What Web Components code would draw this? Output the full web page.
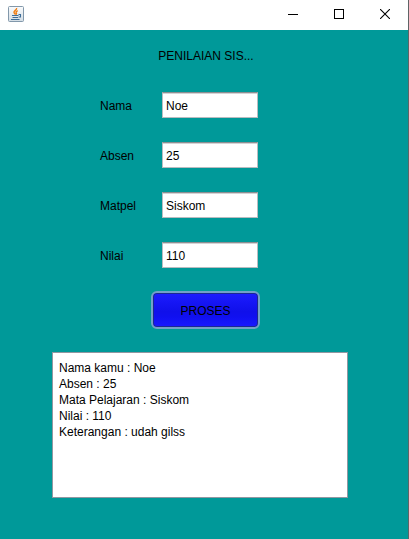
<!DOCTYPE html>
<html lang="id">
<head>
<meta charset="utf-8">
<title>Penilaian</title>
<style>
html, body { height: 100%; margin: 0; }
body { font: 12px/16px "Liberation Sans", Arial, sans-serif; color: #000; background: #fff; }
</style>
</head>
<body>
<app-window>
  <title-bar slot="bar"></title-bar>
  <grade-form>
    <span slot="heading">PENILAIAN SIS...</span>
    <text-field label="Nama" value="Noe"></text-field>
    <text-field label="Absen" value="25"></text-field>
    <text-field label="Matpel" value="Siskom"></text-field>
    <text-field label="Nilai" value="110"></text-field>
    <push-button slot="action">PROSES</push-button>
    <result-area slot="result">Nama kamu : Noe
Absen : 25
Mata Pelajaran : Siskom
Nilai : 110
Keterangan : udah gilss</result-area>
  </grade-form>
</app-window>
<script>
class Base extends HTMLElement {
  constructor() {
    super();
    this.attachShadow({ mode: "open" }).innerHTML = this.constructor.markup;
  }
}

customElements.define("app-window", class extends Base {
  static markup = `
    <style>
      :host { display: flex; flex-direction: column; min-height: 100vh; box-sizing: border-box;
              border-right: 1px solid #5f6466; background: #009999; }
      ::slotted(grade-form) { flex: 1; }
    </style>
    <slot name="bar"></slot><slot></slot>`;
});

customElements.define("title-bar", class extends Base {
  static markup = `
    <style>
      :host { display: flex; justify-content: space-between; align-items: center; height: 30px; background: #fff; }
      .app { display: block; margin-left: 8px; margin-bottom: 2px; }
      .controls { display: flex; }
      button { display: grid; place-items: center; width: 46px; height: 30px; padding: 0 0 2px; border: 0; background: none; }
      svg { display: block; }
    </style>
    <svg class="app" width="16" height="16" viewBox="0 0 16 16" aria-label="Java" role="img">
      <defs><linearGradient id="g" x2="0" y2="1"><stop stop-color="#fafbfc"/><stop offset="1" stop-color="#d3dde5"/></linearGradient></defs>
      <rect x=".5" y=".5" width="15" height="15" rx="1" fill="url(#g)" stroke="#8298ab"/>
      <path d="M8.600 2c.6 2-3 2.700-2.600 4.400.2.900 1.200 1.300 1.400 2.200M9.700 4.600C8.400 5.300 7.600 6 8.300 6.900c.4.600.3 1.100-.2 1.700" fill="none" stroke="#f07d12" stroke-width="1.400"/>
      <path d="M4 9.500h6.500M4.500 11.500h5.500M3 13.500h8.500M10.500 8.500h2v2.500h-2" fill="none" stroke="#3d6c98" stroke-width="1.100"/>
    </svg>
    <div class="controls">
      <button aria-label="Minimize"><svg width="10" height="10" shape-rendering="crispEdges"><path d="M0 5.500h10" stroke="#000"/></svg></button>
      <button aria-label="Maximize"><svg width="10" height="10" shape-rendering="crispEdges"><path d="M.5.500h9v9h-9z" fill="none" stroke="#000"/></svg></button>
      <button aria-label="Close"><svg width="10" height="10"><path d="M0 0l10 10M10 0L0 10" stroke="#000" stroke-width="1.100"/></svg></button>
    </div>`;
});

customElements.define("grade-form", class extends Base {
  static markup = `
    <style>
      :host { display: flex; }
      form { display: flex; flex: 1; flex-direction: column; align-items: center; box-sizing: border-box;
             min-width: 0; padding: 18px 60px 41px 52px; }
      h1 { margin: 0 0 28px; padding-left: 12px; font: inherit; }
      .fields { display: grid; gap: 24px; margin: 0 42px 23px 0; }
      .action { margin: 0 0 23px 11px; }
      ::slotted(result-area) { align-self: stretch; flex: 1; }
    </style>
    <form onsubmit="return false">
      <h1><slot name="heading"></slot></h1>
      <div class="fields"><slot></slot></div>
      <div class="action"><slot name="action"></slot></div>
      <slot name="result"></slot>
    </form>`;
});

customElements.define("text-field", class extends Base {
  static markup = `
    <style>
      :host { display: grid; grid-template-columns: 62px 96px; align-items: center; height: 26px; }
      label { padding-top: 2px; }
      input { box-sizing: border-box; width: 100%; height: 26px; padding: 2px 3px 0; font: inherit; color: #000; background: #fff;
              border: 1px solid #b9bcc0; border-top-color: #8d8e91; border-radius: 0; outline: 0;
              box-shadow: inset 0 1px 0 #d3d3d5; }
    </style>
    <label for="f"></label><input id="f" type="text" autocomplete="off">`;
  connectedCallback() {
    this.shadowRoot.querySelector("label").textContent = this.getAttribute("label");
    this.shadowRoot.querySelector("input").value = this.getAttribute("value");
  }
});

customElements.define("push-button", class extends Base {
  static markup = `
    <style>
      :host { display: block; }
      button { display: block; box-sizing: border-box; min-width: 109px; height: 38px; padding: 2px 16px 0; font: inherit; color: #000;
               border: 2px solid #73a0c8; border-radius: 6px;
               background: linear-gradient(#1c1cff, #1010ea 55%, #1010f0 70%, #1818ff);
               box-shadow: inset 0 0 0 1px #1c2890; }
    </style>
    <button type="button"><slot></slot></button>`;
});

customElements.define("result-area", class extends Base {
  static markup = `
    <style>
      :host { display: flex; min-height: 100px; }
      textarea { flex: 1; box-sizing: border-box; min-width: 0; margin: 0; padding: 7px 6px; resize: none; outline: 0;
                 font: inherit; color: #000; background: #fff; border: 1px solid #9297a1; border-radius: 0; }
    </style>
    <textarea aria-label="Hasil"></textarea>`;
  connectedCallback() {
    this.shadowRoot.querySelector("textarea").value = this.textContent;
  }
});
</script>
</body>
</html>
